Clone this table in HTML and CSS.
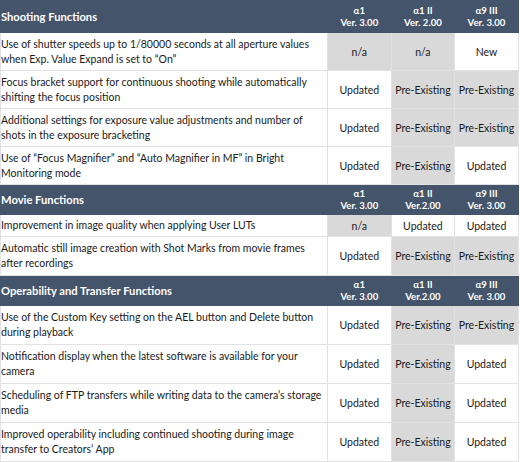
FILE: index.html
```html
<!DOCTYPE html>
<html>
<head>
<meta charset="utf-8">
<link rel="stylesheet" href="styles.css">
</head>
<body>
<table class="fw">
  <colgroup>
    <col class="c-desc"><col class="c-ver"><col class="c-ver"><col class="c-ver">
  </colgroup>
  <tr class="sec">
    <th class="sec-title">Shooting Functions</th>
    <th class="ver">α1<br>Ver. 3.00</th>
    <th class="ver">α1 II<br>Ver. 2.00</th>
    <th class="ver">α9 III<br>Ver. 3.00</th>
  </tr>
  <tr class="r2">
    <td class="desc">Use of shutter speeds up to 1/80000 seconds at all aperture values when Exp. Value Expand is set to “On”</td>
    <td class="st grey">n/a</td><td class="st grey">n/a</td><td class="st">New</td>
  </tr>
  <tr class="r2">
    <td class="desc">Focus bracket support for continuous shooting while automatically shifting the focus position</td>
    <td class="st">Updated</td><td class="st grey">Pre-Existing</td><td class="st grey">Pre-Existing</td>
  </tr>
  <tr class="r2">
    <td class="desc">Additional settings for exposure value adjustments and number of shots in the exposure bracketing</td>
    <td class="st">Updated</td><td class="st grey">Pre-Existing</td><td class="st grey">Pre-Existing</td>
  </tr>
  <tr class="r2">
    <td class="desc">Use of “Focus Magnifier” and “Auto Magnifier in MF” in Bright Monitoring mode</td>
    <td class="st">Updated</td><td class="st grey">Pre-Existing</td><td class="st">Updated</td>
  </tr>
  <tr class="sec sec-b">
    <th class="sec-title">Movie Functions</th>
    <th class="ver">α1<br>Ver. 3.00</th>
    <th class="ver">α1 II<br>Ver.2.00</th>
    <th class="ver">α9 III<br>Ver. 3.00</th>
  </tr>
  <tr class="r1">
    <td class="desc">Improvement in image quality when applying User LUTs</td>
    <td class="st grey">n/a</td><td class="st">Updated</td><td class="st">Updated</td>
  </tr>
  <tr class="r2b">
    <td class="desc">Automatic still image creation with Shot Marks from movie frames after recordings</td>
    <td class="st">Updated</td><td class="st grey">Pre-Existing</td><td class="st grey">Pre-Existing</td>
  </tr>
  <tr class="sec sec-b">
    <th class="sec-title">Operability and Transfer Functions</th>
    <th class="ver">α1<br>Ver. 3.00</th>
    <th class="ver">α1 II<br>Ver.2.00</th>
    <th class="ver">α9 III<br>Ver. 3.00</th>
  </tr>
  <tr class="r2b">
    <td class="desc">Use of the Custom Key setting on the AEL button and Delete button during playback</td>
    <td class="st">Updated</td><td class="st grey">Pre-Existing</td><td class="st grey">Pre-Existing</td>
  </tr>
  <tr class="r2b">
    <td class="desc">Notification display when the latest software is available for your camera</td>
    <td class="st">Updated</td><td class="st grey">Pre-Existing</td><td class="st">Updated</td>
  </tr>
  <tr class="r2b">
    <td class="desc">Scheduling of FTP transfers while writing data to the camera’s storage media</td>
    <td class="st">Updated</td><td class="st grey">Pre-Existing</td><td class="st">Updated</td>
  </tr>
  <tr class="r2b">
    <td class="desc">Improved operability including continued shooting during image<br>transfer to Creators’ App</td>
    <td class="st">Updated</td><td class="st grey">Pre-Existing</td><td class="st">Updated</td>
  </tr>
</table>
</body>
</html>
```
FILE: styles.css
```css
html, body {
  margin: 0;
  padding: 0;
  background: #ffffff;
}
body {
  font-family: Lato, "Open Sans", "Liberation Sans", sans-serif;
  color: #1a1a1a;
}
.fw {
  width: 518px;
  table-layout: fixed;
  border-collapse: collapse;
  font-size: 10.5px;
}
.c-desc { width: 327px; }
.c-ver { width: 63.6px; }
.fw td, .fw th {
  padding: 0;
  border: 1px solid #e2e2e2;
}
.sec th {
  background: #44546a;
  color: #ffffff;
  border-color: #44546a;
  height: 31px;
}
.sec-b th { height: 29px; }
.sec-title {
  text-align: left;
  padding-left: 6px;
  font-size: 11.2px;
  font-weight: 700;
}
.ver {
  font-size: 9.6px;
  font-weight: 700;
  line-height: 12px;
  text-align: center;
}
.desc {
  padding: 0 6px;
  line-height: 15px;
  vertical-align: middle;
}
.r2 td { height: 37px; }
.r2b td { height: 38px; }
.r1 td { height: 21px; }
.st {
  text-align: center;
  vertical-align: middle;
  white-space: nowrap;
}
.grey { background: #d9d9d9; }
```
